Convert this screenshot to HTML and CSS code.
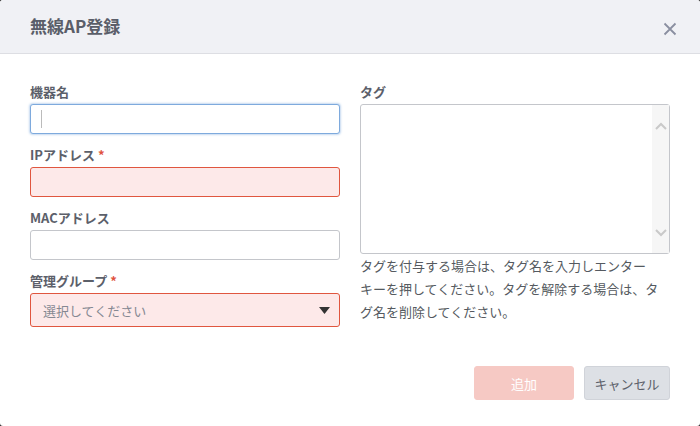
FILE: index.html
```html
<!DOCTYPE html>
<html lang="ja">
<head>
<meta charset="utf-8">
<title>無線AP登録</title>
<link rel="stylesheet" href="styles.css">
</head>
<body>
<div class="modal">
  <div class="modal-header">
    <h1 class="modal-title">無線AP登録</h1>
    <button class="close" type="button" aria-label="閉じる">
      <svg width="14" height="14" viewBox="0 0 14 14"><path d="M1.5 1.5 L12.5 12.5 M12.5 1.5 L1.5 12.5" stroke="#8a8fa0" stroke-width="1.8" fill="none"/></svg>
    </button>
  </div>
  <div class="modal-body">
    <div class="col">
      <div class="group">
        <div class="label">機器名</div>
        <div class="input focused"><span class="caret"></span></div>
      </div>
      <div class="group">
        <div class="label">IPアドレス<span class="req">*</span></div>
        <div class="input error"></div>
      </div>
      <div class="group">
        <div class="label">MACアドレス</div>
        <div class="input"></div>
      </div>
      <div class="group">
        <div class="label">管理グループ<span class="req">*</span></div>
        <div class="select error">
          <span class="placeholder">選択してください</span>
          <svg class="arrow" width="11" height="7" viewBox="0 0 11 7"><path d="M0 0 H11 L5.5 7 Z" fill="#333"/></svg>
        </div>
      </div>
    </div>
    <div class="col">
      <div class="label">タグ</div>
      <div class="textarea">
        <div class="ta-content"></div>
        <div class="scroll-track">
          <svg width="12" height="8" viewBox="0 0 12 8"><path d="M1 7 L6 2 L11 7" stroke="#c9c9c9" stroke-width="2" fill="none"/></svg>
          <svg width="12" height="8" viewBox="0 0 12 8"><path d="M1 1 L6 6 L11 1" stroke="#c9c9c9" stroke-width="2" fill="none"/></svg>
        </div>
      </div>
      <p class="help">タグを付与する場合は、タグ名を入力しエンターキーを押してください。タグを解除する場合は、タグ名を削除してください。</p>
    </div>
  </div>
  <div class="modal-footer">
    <button class="btn btn-primary" type="button">追加</button>
    <button class="btn btn-default" type="button">キャンセル</button>
  </div>
</div>
</body>
</html>
```
FILE: styles.css
```css
html, body {
  margin: 0;
  padding: 0;
  background: #2b2b2b;
}
body {
  font-family: "Noto Sans CJK JP", "Noto Sans", sans-serif;
  color: #555;
}
.modal {
  width: 700px;
  height: 426px;
  background: #fff;
  border-radius: 3px;
  overflow: hidden;
  box-sizing: border-box;
}
.modal-header {
  height: 53px;
  background: #f0f1f5;
  border-bottom: 1px solid #dddee3;
  display: flex;
  align-items: center;
  justify-content: space-between;
  padding: 0 23px 0 30px;
}
.modal-title {
  margin: 0;
  font-size: 17px;
  font-weight: bold;
  color: #5a5e69;
  line-height: 1;
  position: relative;
  top: -1px;
}
.close {
  border: 0;
  background: none;
  padding: 0;
  width: 14px;
  height: 14px;
  display: flex;
  position: relative;
  top: 2px;
}
.modal-body {
  display: grid;
  grid-template-columns: 310px 310px;
  column-gap: 20px;
  padding: 29px 30px 0;
  align-items: start;
}
.group {
  margin-bottom: 12px;
}
.group:last-child {
  margin-bottom: 0;
}
.label {
  font-size: 13px;
  font-weight: bold;
  color: #5c606a;
  line-height: 18px;
  margin-bottom: 3px;
}
.req {
  color: #e0533e;
  margin-left: 3px;
}
.input {
  box-sizing: border-box;
  height: 30px;
  border: 1px solid #c4c6cb;
  border-radius: 3px;
  background: #fff;
  display: flex;
  align-items: center;
}
.input.focused {
  border-color: #7eaadd;
  box-shadow: 0 0 2px 1px rgba(126, 170, 221, 0.45);
}
.caret {
  width: 1px;
  height: 18px;
  background: #bbb;
  margin-left: 10px;
}
.error {
  background: #fde9e9;
  border-color: #e0563f;
}
.select {
  box-sizing: border-box;
  height: 34px;
  border: 1px solid #e0563f;
  border-radius: 3px;
  display: flex;
  align-items: center;
  justify-content: space-between;
  padding: 0 9px 0 12px;
}
.placeholder {
  font-size: 13px;
  color: #858892;
}
.textarea {
  box-sizing: border-box;
  height: 150px;
  border: 1px solid #c4c6cb;
  border-radius: 3px;
  display: flex;
}
.ta-content {
  flex: 1;
}
.scroll-track {
  width: 17px;
  background: #f6f6f6;
  display: flex;
  flex-direction: column;
  justify-content: space-between;
  align-items: center;
  padding: 17px 0 16px;
}
.help {
  margin: 0;
  font-size: 13px;
  line-height: 23px;
  color: #555a60;
  line-break: strict;
}
.modal-footer {
  display: flex;
  justify-content: flex-end;
  gap: 10px;
  padding: 39px 30px 0;
}
.btn {
  box-sizing: border-box;
  height: 34px;
  border-radius: 3px;
  font-family: inherit;
  font-size: 13px;
  padding: 0;
  white-space: nowrap;
}
.btn-primary {
  width: 100px;
  background: #f6c9c4;
  border: 1px solid #f6c9c4;
  color: #fff;
}
.btn-default {
  width: 86px;
  background: #dde0e5;
  border: 1px solid #d0d3d9;
  color: #5c606a;
}
```
